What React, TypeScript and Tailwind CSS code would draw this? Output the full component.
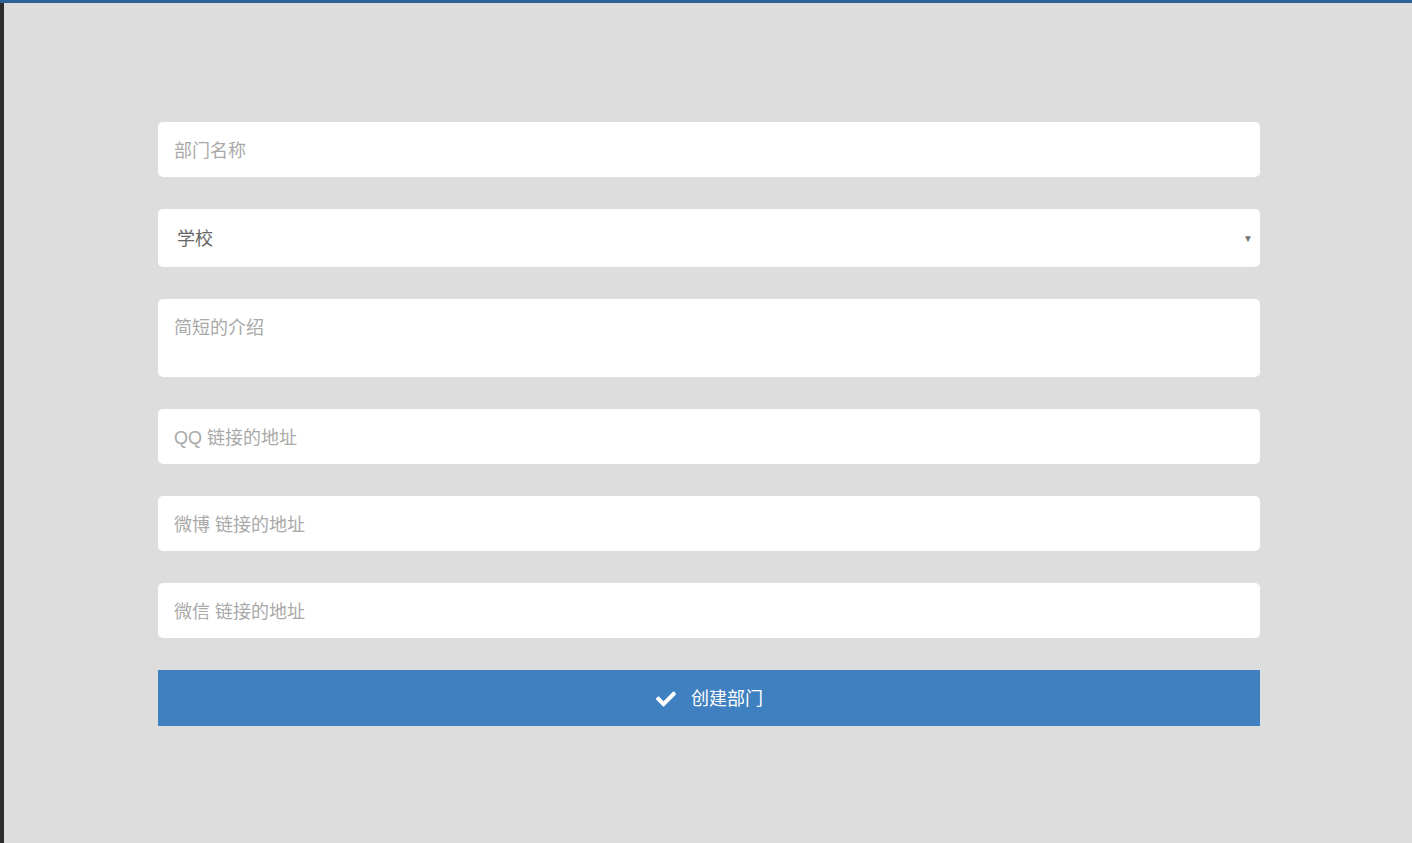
import { FaCheck } from "react-icons/fa";

const font = { fontFamily: '"Liberation Sans", "Noto Sans CJK SC", sans-serif' };

function Field({ placeholder }: { placeholder: string }) {
  return (
    <input
      type="text"
      placeholder={placeholder}
      className="h-[55px] w-full rounded-[5px] bg-white px-4 pt-[4px] text-[18px] text-[#555] outline-none placeholder:text-[#a9a9a9]"
    />
  );
}

export default function App() {
  return (
    <div className="min-h-screen bg-[#dddddd]" style={font}>
      <div className="h-[3px] bg-[#2b6394]" />
      <div className="flex min-h-[840px]">
        <div className="w-[4px] shrink-0 bg-[#2d2d2d]" />
        <main className="flex flex-1 justify-center pl-[2px] pt-[119px]">
          <form className="flex w-[1102px] flex-col gap-8">
            <Field placeholder="部门名称" />

            <div className="relative">
              <select
                defaultValue="school"
                className="h-[58px] w-full appearance-none rounded-[5px] bg-white pl-[19px] pt-[2px] text-[18px] text-[#666] outline-none"
              >
                <option value="school">学校</option>
              </select>
              <span className="pointer-events-none absolute right-[7px] top-1/2 -translate-y-1/2 text-[10px] text-[#777]">
                ▼
              </span>
            </div>

            <textarea
              placeholder="简短的介绍"
              className="h-[78px] w-full resize-none rounded-[5px] bg-white px-4 pt-[18px] text-[18px] leading-[22px] text-[#555] outline-none placeholder:text-[#a9a9a9]"
            />

            <Field placeholder="QQ 链接的地址" />
            <Field placeholder="微博 链接的地址" />
            <Field placeholder="微信 链接的地址" />

            <button
              type="button"
              className="flex h-[56px] w-full items-center justify-center gap-[14px] bg-[#3f80c1] pt-[2px] text-[18px] text-white"
            >
              <FaCheck className="h-[20px] w-[22px]" />
              创建部门
            </button>
          </form>
        </main>
      </div>
    </div>
  );
}
